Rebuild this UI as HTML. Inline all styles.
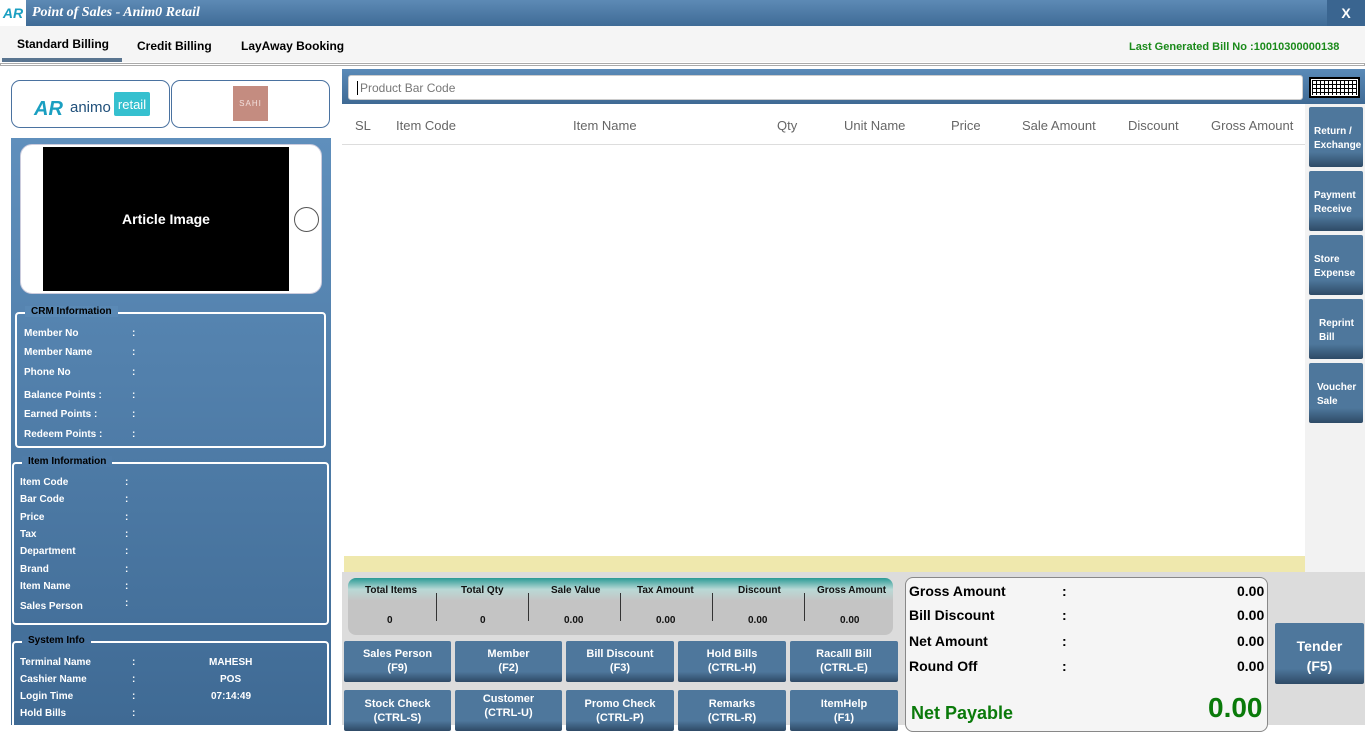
<!DOCTYPE html>
<html><head><meta charset="utf-8"><style>
*{margin:0;padding:0;box-sizing:border-box}
body{width:1365px;height:725px;overflow:hidden;background:#fff;font-family:"Liberation Sans",sans-serif;position:relative}
.a{position:absolute}
.btn{position:absolute;background:linear-gradient(#4e779c 0,#4e779c 75%,#2e4a66 100%);color:#fff;font-size:11px;font-weight:bold;text-align:center;border-radius:2px;line-height:14px}
.side{position:absolute;left:1309px;width:54px;height:60px;background:linear-gradient(#4e779c 0,#4e779c 75%,#2e4a66 100%);color:#fff;font-size:10px;font-weight:bold;border-radius:2px;line-height:14px;padding:18px 0 0 5px}
.lbl{position:absolute;color:#fff;font-size:10px;font-weight:bold}
.grp{position:absolute;border:2px solid #fff;border-radius:4px}
.gt{position:absolute;font-size:10px;font-weight:bold;color:#000;padding:0 6px;top:-8px;left:8px}
.th{position:absolute;top:118px;font-size:13px;color:#666}
.sm{position:absolute;font-size:10px;font-weight:bold;color:#111}
.tt{position:absolute;font-size:14px;font-weight:bold;color:#000}
</style></head><body>
<div class="a" style="left:0;top:0;width:1365px;height:26px;background:linear-gradient(#5d8ab5,#3f6b96)"></div>
<div class="a" style="left:0;top:0;width:26px;height:26px;background:#fff;color:#1a9fc1;font-weight:bold;font-style:italic;font-size:14px;line-height:26px;text-align:center">AR</div>
<div class="a" style="left:32px;top:5px;color:#fff;font-family:'Liberation Serif',serif;font-style:italic;font-weight:bold;font-size:14px">Point of Sales - Anim0 Retail</div>
<div class="a" style="left:1327px;top:0;width:38px;height:26px;background:#3a6590;color:#fff;font-weight:bold;font-size:14px;text-align:center;line-height:26px">X</div>
<div class="a" style="left:0;top:26px;width:1365px;height:36px;background:#f5f5f5"></div>
<div class="a" style="left:17px;top:37px;font-size:12px;font-weight:bold">Standard Billing</div>
<div class="a" style="left:137px;top:39px;font-size:12px;font-weight:bold">Credit Billing</div>
<div class="a" style="left:241px;top:39px;font-size:12px;font-weight:bold">LayAway Booking</div>
<div class="a" style="left:2px;top:58px;width:120px;height:4px;background:#5a7590"></div>
<div class="a" style="left:1129px;top:41px;font-size:11px;font-weight:bold;color:#1a8a1a">Last Generated Bill No :10010300000138</div>
<div class="a" style="left:0;top:63px;width:1365px;height:3px;border:1px solid #aaa;background:#fff"></div>
<div class="a" style="left:11px;top:80px;width:159px;height:48px;border:1px solid #4a72a0;border-radius:9px;background:#fff"></div>
<div class="a" style="left:34px;top:98px;color:#1a9fc1;font-weight:bold;font-style:italic;font-size:20px">AR</div>
<div class="a" style="left:70px;top:99px;color:#1f4f7a;font-size:15px">animo</div>
<div class="a" style="left:114px;top:92px;width:36px;height:24px;background:#35c0cf;color:#fff;font-size:13px;text-align:center;line-height:26px;border-radius:2px">retail</div>
<div class="a" style="left:171px;top:80px;width:159px;height:48px;border:1px solid #4a72a0;border-radius:9px;background:#fff"></div>
<div class="a" style="left:233px;top:86px;width:35px;height:35px;background:#c48c80;color:#f3e0dc;font-size:8px;text-align:center;line-height:35px;letter-spacing:1px">SAHI</div>
<div class="a" style="left:11px;top:138px;width:320px;height:587px;background:linear-gradient(#5f8fbc,#3f6a94)"></div>
<div class="a" style="left:20px;top:144px;width:302px;height:150px;background:#fff;border-radius:12px;border:1px solid #ccd"></div>
<div class="a" style="left:43px;top:147px;width:246px;height:144px;background:#000;color:#fff;font-weight:bold;font-size:14px;text-align:center;line-height:144px">Article Image</div>
<div class="a" style="left:294px;top:207px;width:25px;height:25px;border:1px solid #555;border-radius:50%"></div>
<div class="grp" style="left:15px;top:312px;width:311px;height:136px"><div class="gt" style="background:#5a89b5;color:#000">CRM Information</div></div>
<div class="lbl" style="left:24px;top:328px">Member No</div><div class="lbl" style="left:132px;top:328px">:</div>
<div class="lbl" style="left:24px;top:347px">Member Name</div><div class="lbl" style="left:132px;top:347px">:</div>
<div class="lbl" style="left:24px;top:367px">Phone No</div><div class="lbl" style="left:132px;top:367px">:</div>
<div class="lbl" style="left:24px;top:390px">Balance Points :</div><div class="lbl" style="left:132px;top:390px">:</div>
<div class="lbl" style="left:24px;top:409px">Earned Points :</div><div class="lbl" style="left:132px;top:409px">:</div>
<div class="lbl" style="left:24px;top:429px">Redeem Points :</div><div class="lbl" style="left:132px;top:429px">:</div>
<div class="grp" style="left:12px;top:462px;width:317px;height:163px"><div class="gt" style="background:#4f7ca8">Item Information</div></div>
<div class="lbl" style="left:20px;top:477px">Item Code</div><div class="lbl" style="left:125px;top:477px">:</div>
<div class="lbl" style="left:20px;top:494px">Bar Code</div><div class="lbl" style="left:125px;top:494px">:</div>
<div class="lbl" style="left:20px;top:512px">Price</div><div class="lbl" style="left:125px;top:512px">:</div>
<div class="lbl" style="left:20px;top:529px">Tax</div><div class="lbl" style="left:125px;top:529px">:</div>
<div class="lbl" style="left:20px;top:546px">Department</div><div class="lbl" style="left:125px;top:546px">:</div>
<div class="lbl" style="left:20px;top:564px">Brand</div><div class="lbl" style="left:125px;top:564px">:</div>
<div class="lbl" style="left:20px;top:581px">Item Name</div><div class="lbl" style="left:125px;top:581px">:</div>
<div class="lbl" style="left:20px;top:601px">Sales Person</div><div class="lbl" style="left:125px;top:598px">:</div>
<div class="grp" style="left:12px;top:641px;width:317px;height:90px"><div class="gt" style="background:#45709b">System Info</div></div>
<div class="lbl" style="left:20px;top:657px">Terminal Name</div><div class="lbl" style="left:132px;top:657px">:</div><div class="lbl" style="left:209px;top:657px">MAHESH</div>
<div class="lbl" style="left:20px;top:674px">Cashier Name</div><div class="lbl" style="left:132px;top:674px">:</div><div class="lbl" style="left:220px;top:674px">POS</div>
<div class="lbl" style="left:20px;top:691px">Login Time</div><div class="lbl" style="left:132px;top:691px">:</div><div class="lbl" style="left:211px;top:691px">07:14:49</div>
<div class="lbl" style="left:20px;top:708px">Hold Bills</div><div class="lbl" style="left:132px;top:708px">:</div>
<div class="a" style="left:342px;top:69px;width:1023px;height:35px;background:linear-gradient(#5a8ab8,#3f6a94)"></div>
<div class="a" style="left:348px;top:75px;width:955px;height:25px;background:#fff;border-radius:3px;border:1px solid #ccc;font-size:12px;color:#777;padding:5px 8px"><span style="border-left:1px solid #000;padding-left:2px">Product Bar Code</span></div>
<div class="a" style="left:1309px;top:77px;width:51px;height:21px;background:#fff;border:2px solid #000"></div>
<div class="a" style="left:1312px;top:80px;width:45px;height:15px;background:repeating-linear-gradient(90deg,#000 0 1px,transparent 1px 4px),repeating-linear-gradient(#000 0 1px,transparent 1px 4px)"></div>
<div class="th" style="left:355px">SL</div><div class="th" style="left:396px">Item Code</div><div class="th" style="left:573px">Item Name</div><div class="th" style="left:777px">Qty</div><div class="th" style="left:844px">Unit Name</div><div class="th" style="left:951px">Price</div><div class="th" style="left:1022px">Sale Amount</div><div class="th" style="left:1128px">Discount</div><div class="th" style="left:1211px">Gross Amount</div>
<div class="a" style="left:342px;top:144px;width:963px;height:1px;background:#ddd"></div>
<div class="a" style="left:1305px;top:104px;width:60px;height:468px;background:#f2f2f2"></div>
<div class="side" style="top:107px">Return /<br>Exchange</div>
<div class="side" style="top:171px">Payment<br>Receive</div>
<div class="side" style="top:235px">Store<br>Expense</div>
<div class="side" style="top:299px;padding-left:10px">Reprint<br>Bill</div>
<div class="side" style="top:363px;padding-left:8px">Voucher<br>Sale</div>
<div class="a" style="left:344px;top:556px;width:961px;height:16px;background:#efe8ad"></div>
<div class="a" style="left:342px;top:572px;width:1023px;height:153px;background:#dcdcdc"></div>
<div class="a" style="left:348px;top:578px;width:545px;height:57px;border-radius:8px;background:linear-gradient(#2a9a95 0,#b9d9d6 20%,#c4c4c4 40%,#c4c4c4 100%)"></div>
<div class="sm" style="left:365px;top:585px">Total Items</div><div class="sm" style="left:461px;top:585px">Total Qty</div><div class="sm" style="left:551px;top:585px">Sale Value</div><div class="sm" style="left:637px;top:585px">Tax Amount</div><div class="sm" style="left:738px;top:585px">Discount</div><div class="sm" style="left:817px;top:585px">Gross Amount</div>
<div class="sm" style="left:387px;top:615px">0</div><div class="sm" style="left:480px;top:615px">0</div><div class="sm" style="left:564px;top:615px">0.00</div><div class="sm" style="left:656px;top:615px">0.00</div><div class="sm" style="left:748px;top:615px">0.00</div><div class="sm" style="left:840px;top:615px">0.00</div>
<div class="a" style="left:436px;top:593px;width:1px;height:28px;background:#333"></div><div class="a" style="left:528px;top:593px;width:1px;height:28px;background:#333"></div><div class="a" style="left:620px;top:593px;width:1px;height:28px;background:#333"></div><div class="a" style="left:712px;top:593px;width:1px;height:28px;background:#333"></div><div class="a" style="left:804px;top:593px;width:1px;height:28px;background:#333"></div>
<div class="btn" style="left:344px;top:641px;width:107px;height:41px;padding-top:6px">Sales Person<br>(F9)</div>
<div class="btn" style="left:455px;top:641px;width:107px;height:41px;padding-top:6px">Member<br>(F2)</div>
<div class="btn" style="left:566px;top:641px;width:108px;height:41px;padding-top:6px">Bill Discount<br>(F3)</div>
<div class="btn" style="left:678px;top:641px;width:108px;height:41px;padding-top:6px">Hold Bills<br>(CTRL-H)</div>
<div class="btn" style="left:790px;top:641px;width:108px;height:41px;padding-top:6px">Racalll Bill<br>(CTRL-E)</div>
<div class="btn" style="left:344px;top:690px;width:107px;height:41px;padding-top:7px">Stock Check<br>(CTRL-S)</div>
<div class="btn" style="left:455px;top:690px;width:107px;height:41px;padding-top:2px">Customer<br>(CTRL-U)</div>
<div class="btn" style="left:566px;top:690px;width:108px;height:41px;padding-top:7px">Promo Check<br>(CTRL-P)</div>
<div class="btn" style="left:678px;top:690px;width:108px;height:41px;padding-top:7px">Remarks<br>(CTRL-R)</div>
<div class="btn" style="left:790px;top:690px;width:108px;height:41px;padding-top:7px">ItemHelp<br>(F1)</div>
<div class="a" style="left:905px;top:577px;width:363px;height:155px;background:#f5f5f5;border:1px solid #888;border-radius:8px"></div>
<div class="tt" style="left:909px;top:583px">Gross Amount</div><div class="tt" style="left:1062px;top:583px">:</div><div class="tt" style="left:1237px;top:583px">0.00</div>
<div class="tt" style="left:909px;top:607px">Bill Discount</div><div class="tt" style="left:1062px;top:607px">:</div><div class="tt" style="left:1237px;top:607px">0.00</div>
<div class="tt" style="left:909px;top:633px">Net Amount</div><div class="tt" style="left:1062px;top:633px">:</div><div class="tt" style="left:1237px;top:633px">0.00</div>
<div class="tt" style="left:909px;top:658px">Round Off</div><div class="tt" style="left:1062px;top:658px">:</div><div class="tt" style="left:1237px;top:658px">0.00</div>
<div class="a" style="left:911px;top:703px;font-size:18px;font-weight:bold;color:#0a7a0a">Net Payable</div>
<div class="a" style="left:1208px;top:692px;font-size:28px;font-weight:bold;color:#0a7a0a">0.00</div>
<div class="btn" style="left:1275px;top:623px;width:89px;height:61px;font-size:14px;line-height:20px;padding-top:13px">Tender<br>(F5)</div>
</body></html>
